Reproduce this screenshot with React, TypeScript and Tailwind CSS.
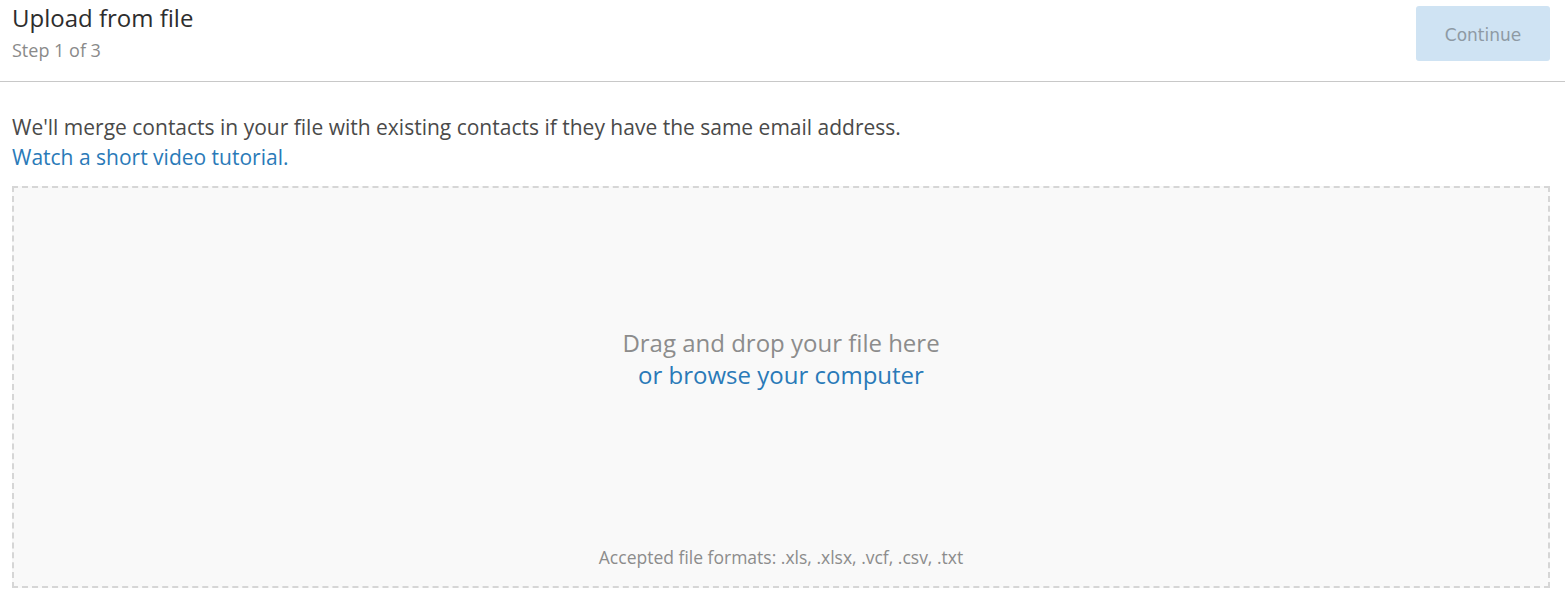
export default function App() {
  return (
    <main className="min-h-screen bg-white font-['Open_Sans',sans-serif]">
      {/* Header */}
      <header className="flex items-start justify-between border-b border-[#c8c8c8] pl-3 pr-[15px] h-[82px]">
        <div className="pt-[3px]">
          <h1 className="text-[24px] leading-[30px] text-[#2d2d2d]">Upload from file</h1>
          <p className="mt-[6px] text-[18px] leading-[22px] text-[#8a8a8a]">Step 1 of 3</p>
        </div>
        <button
          disabled
          className="mt-[6px] h-[55px] w-[134px] rounded-[3px] bg-[#cfe3f3] pt-[4px] text-[17px] text-[#8e9aa4] font-['DejaVu_Sans',sans-serif]"
        >
          Continue
        </button>
      </header>

      {/* Body */}
      <section className="px-3 pr-[15px] pt-[30px]">
        <p className="text-[21px] leading-[30px] text-[#4a4a4a]">
          We'll merge contacts in your file with existing contacts if they have the same email address.
        </p>
        <a href="#" className="block text-[21px] leading-[30px] text-[#2a7ab8]">
          Watch a short video tutorial.
        </a>

        <div className="mt-[14px] flex h-[402px] flex-col items-center border-2 border-dashed border-[#d6d6d6] bg-[#f9f9f9]">
          <div className="flex flex-1 flex-col items-center justify-center pb-[18px] text-center">
            <p className="text-[24px] leading-[32px] text-[#8c8c8c]">Drag and drop your file here</p>
            <a href="#" className="text-[24px] leading-[32px] text-[#2a7ab8]">or browse your computer</a>
          </div>
          <p className="pb-[19px] text-[17.5px] leading-[20px] text-[#8c8c8c]">
            Accepted file formats: .xls, .xlsx, .vcf, .csv, .txt
          </p>
        </div>
      </section>
    </main>
  )
}
